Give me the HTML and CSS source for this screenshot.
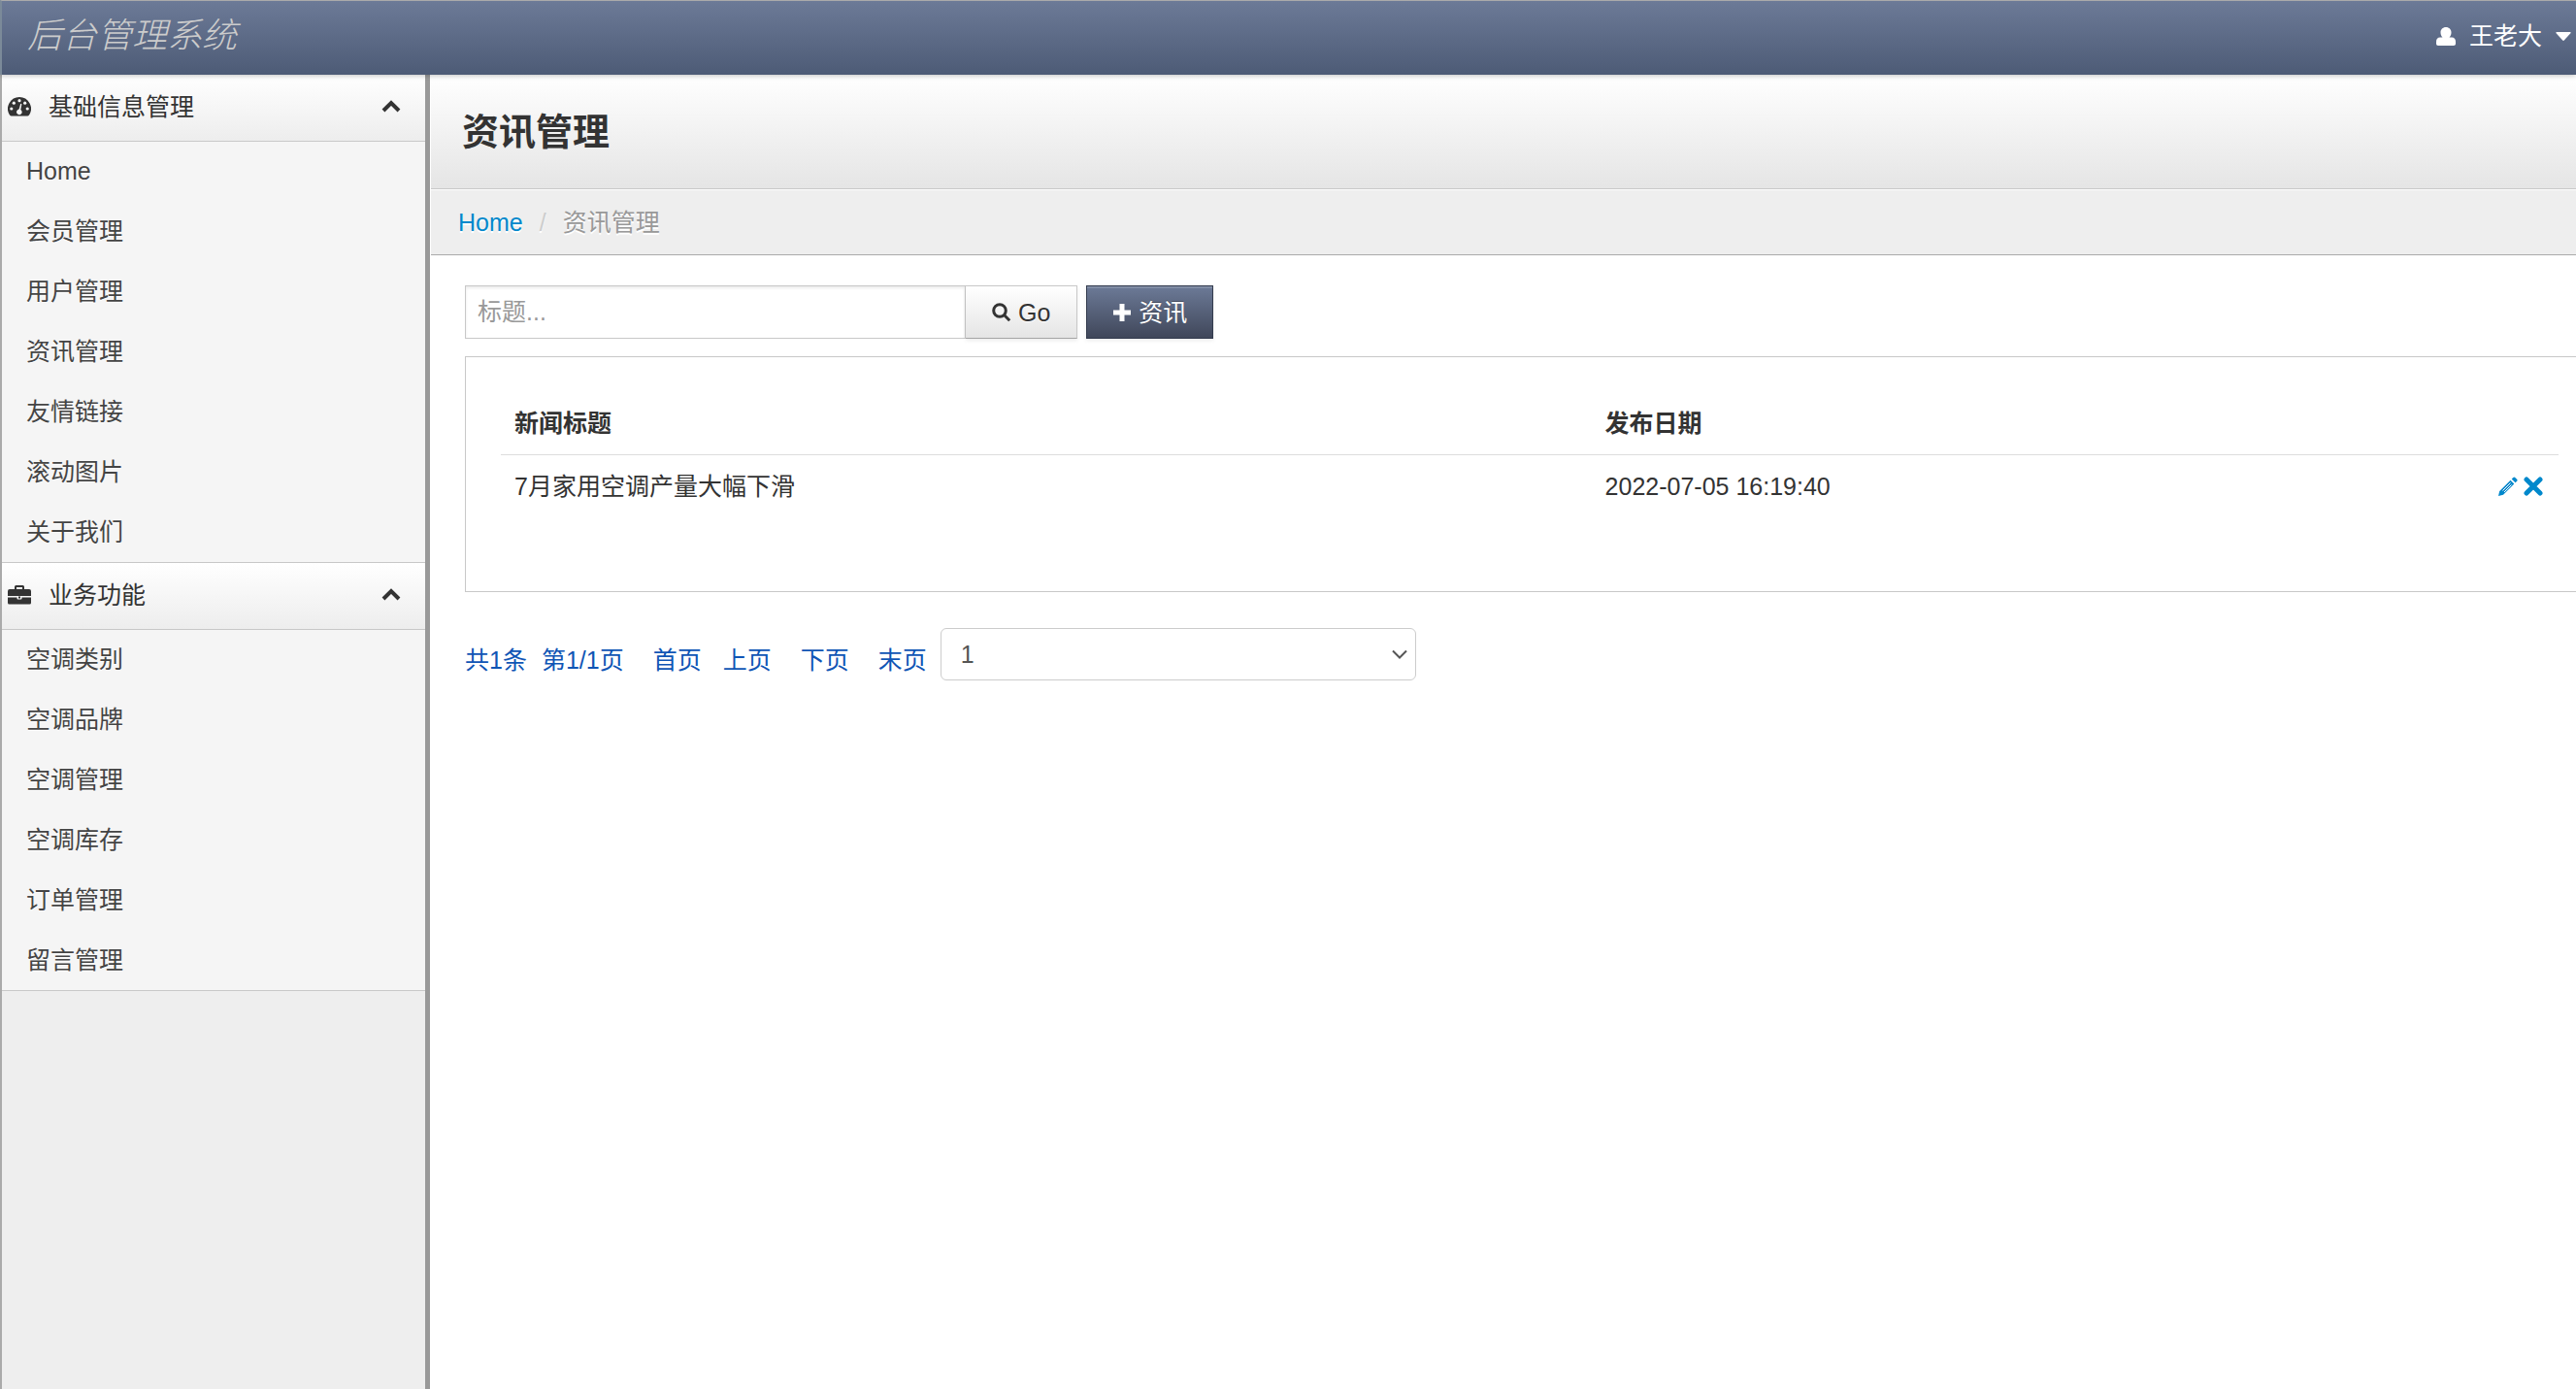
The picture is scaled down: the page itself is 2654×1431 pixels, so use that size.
FILE: index.html
```html
<!DOCTYPE html>
<html lang="zh-CN">
<head>
    <meta charset="UTF-8">
    <meta name="viewport" content="width=device-width, initial-scale=1.0">
    <title>后台管理系统</title>
    <link rel="stylesheet" href="styles.css">
</head>
<body>
    <header class="navbar">
        <a class="brand" href="#">后台管理系统</a>
        <button class="user-menu" type="button">
            <svg class="icon-user" viewBox="0 0 20 19"><path d="M10 0c3.300 0 5.500 2.400 5.500 5.500 0 2-.7 3.900-2 5h2.500c2.500 0 4 1.700 4 4.500V17c0 1.200-.8 2-2 2H2c-1.200 0-2-.8-2-2v-2c0-2.800 1.500-4.500 4-4.500h2.500c-1.300-1.100-2-3-2-5C4.500 2.400 6.700 0 10 0z"/></svg>
            <span>王老大</span>
            <svg class="icon-caret" viewBox="0 0 16 9"><path d="M1 0h14q1 0 .6.900L8.800 8.500q-.8.800-1.600 0L.4.900Q0 0 1 0z"/></svg>
        </button>
    </header>
    <div class="layout">
        <nav class="sidebar">
            <button class="nav-header" type="button">
                <svg class="icon-nav" viewBox="0 0 24 20">
                    <path d="M12 0a12 12 0 0 1 10.200 18.300q-.9 1.200-2 1.200H3.800q-1.100 0-2-1.200A12 12 0 0 1 12 0z"/>
                    <g class="cutout">
                        <circle cx="3.800" cy="12" r="1.600"/>
                        <circle cx="6.300" cy="6.200" r="1.600"/>
                        <circle cx="12" cy="3.700" r="1.600"/>
                        <circle cx="17.700" cy="6.200" r="1.600"/>
                        <circle cx="20.200" cy="12" r="1.600"/>
                        <path d="M13.200 6.800l1.200.4-1.100 5.800a2.800 2.800 0 1 1-1.700-.4z"/>
                    </g>
                </svg>
                <span>基础信息管理</span>
                <svg class="icon-chevron" viewBox="0 0 20 13"><path d="M2 11L10 3l8 8"/></svg>
            </button>
            <ul class="nav-list">
                <li><a href="#">Home</a></li>
                <li><a href="#">会员管理</a></li>
                <li><a href="#">用户管理</a></li>
                <li><a href="#">资讯管理</a></li>
                <li><a href="#">友情链接</a></li>
                <li><a href="#">滚动图片</a></li>
                <li><a href="#">关于我们</a></li>
            </ul>
            <button class="nav-header" type="button">
                <svg class="icon-nav" viewBox="0 0 24 20">
                    <path d="M7 4V1.500Q7 0 8.500 0h7Q17 0 17 1.500V4h5q2 0 2 2v5H0V6q0-2 2-2zM9 4h6V2H9zM0 12.500h9.500v1q0 1 1 1h3q1 0 1-1v-1H24V18q0 1.500-1.500 1.500h-21Q0 19.500 0 18zM11 11.500h2v2h-2z" fill-rule="evenodd"/>
                </svg>
                <span>业务功能</span>
                <svg class="icon-chevron" viewBox="0 0 20 13"><path d="M2 11L10 3l8 8"/></svg>
            </button>
            <ul class="nav-list">
                <li><a href="#">空调类别</a></li>
                <li><a href="#">空调品牌</a></li>
                <li><a href="#">空调管理</a></li>
                <li><a href="#">空调库存</a></li>
                <li><a href="#">订单管理</a></li>
                <li><a href="#">留言管理</a></li>
            </ul>
        </nav>
        <main class="content">
            <div class="page-header">
                <h1>资讯管理</h1>
            </div>
            <ul class="breadcrumb">
                <li><a href="#">Home</a></li>
                <li class="divider">/</li>
                <li class="active">资讯管理</li>
            </ul>
            <div class="container">
                <form class="toolbar">
                    <input class="search-input" type="text" placeholder="标题..." aria-label="标题">
                    <button class="btn" type="button">
                        <svg class="icon-search" viewBox="0 0 20 20"><circle cx="8" cy="8" r="6.300"/><path d="M12.800 12.800l5.400 5.400"/></svg>
                        Go
                    </button>
                    <button class="btn btn-primary" type="button">
                        <svg class="icon-plus" viewBox="0 0 20 20"><path d="M10 1v18M1 10h18"/></svg>
                        资讯
                    </button>
                </form>
                <div class="well">
                    <table class="table">
                        <thead>
                            <tr>
                                <th class="col-title">新闻标题</th>
                                <th>发布日期</th>
                                <th class="col-actions"></th>
                            </tr>
                        </thead>
                        <tbody>
                            <tr>
                                <td>7月家用空调产量大幅下滑</td>
                                <td>2022-07-05 16:19:40</td>
                                <td>
                                    <div class="actions">
                                        <a href="#" aria-label="编辑"><svg viewBox="0 0 20 20"><path d="M0 20l1.200-5L12.500 3.700l3.800 3.800L5 18.800zM13.700 2.500l1.600-1.600q1-1 2 0l1.800 1.800q1 1 0 2l-1.600 1.600z"/><path class="pencil-line" d="M4.500 14.500l8-8M6 16l7.500-7.500"/></svg></a>
                                        <a href="#" aria-label="删除"><svg viewBox="0 0 20 20"><path class="cross" d="M3 3l14 14M17 3L3 17"/></svg></a>
                                    </div>
                                </td>
                            </tr>
                        </tbody>
                    </table>
                </div>
                <div class="pagination">
                    <div class="pages">
                        <span>共1条</span>
                        <span class="current">第1/1页</span>
                        <a href="#">首页</a>
                        <a class="prev" href="#">上页</a>
                        <a href="#">下页</a>
                        <a href="#">末页</a>
                    </div>
                    <div class="select-wrap">
                        <select class="page-select" aria-label="页码">
                            <option>1</option>
                        </select>
                        <svg class="select-arrow" viewBox="0 0 16 10"><path d="M1 1.500l7 7 7-7"/></svg>
                    </div>
                </div>
            </div>
        </main>
    </div>
</body>
</html>
```

FILE: styles.css
```css
* {
    box-sizing: border-box;
}
body {
    margin: 0;
    min-height: 100vh;
    display: flex;
    flex-direction: column;
    font-family: "Liberation Sans", "Noto Sans CJK SC", sans-serif;
    font-size: 25px;
    line-height: 36px;
    color: #333;
    background: #fff;
}
a {
    color: #0088cc;
    text-decoration: none;
}
button, input, select {
    font: inherit;
    color: inherit;
}
button {
    cursor: pointer;
}
svg {
    display: block;
    flex: none;
    fill: currentColor;
}
ul {
    list-style: none;
    margin: 0;
    padding: 0;
}

/* top bar */
.navbar {
    position: relative;
    z-index: 1;
    display: flex;
    justify-content: space-between;
    align-items: center;
    height: 77px;
    padding: 0 5px 4px 26px;
    border-top: 1px solid #aaa;
    border-left: 2px solid #7b8a99;
    background: linear-gradient(to bottom, #6c7a97, #4d5b76);
    box-shadow: 0 1px 5px rgba(0, 0, 0, 0.25);
}
.brand {
    font-size: 36px;
    font-style: italic;
    font-weight: 300;
    color: #ccc;
}
.user-menu {
    display: flex;
    align-items: center;
    gap: 14px;
    padding: 0;
    border: 0;
    background: none;
    color: #fff;
}
.icon-user {
    width: 20px;
    height: 19px;
}
.icon-caret {
    width: 16px;
    height: 9px;
}

.layout {
    flex: 1;
    display: flex;
}

/* sidebar */
.sidebar {
    flex: none;
    width: 443px;
    border-left: 2px solid #aaa;
    border-right: 5px solid #999;
    background: #eee;
}
.nav-header {
    display: flex;
    align-items: center;
    width: 100%;
    height: 69px;
    padding: 0 25px 3px 6px;
    border: 0;
    border-bottom: 1px solid #c8c8c8;
    background: linear-gradient(to bottom, #fff, #ededed);
    text-align: left;
}
.nav-header span {
    flex: 1;
    margin-left: 18px;
}
.icon-nav {
    width: 24px;
    height: 20px;
}
.cutout {
    fill: #f8f8f8;
}
.icon-chevron {
    width: 20px;
    height: 13px;
    fill: none;
    stroke: currentColor;
    stroke-width: 4;
}
.nav-list {
    display: flex;
    flex-direction: column;
    gap: 1px;
    border-bottom: 1px solid #c8c8c8;
    background: #f5f5f5;
}
.nav-list a {
    display: block;
    padding: 0 25px;
    line-height: 61px;
    color: #444;
    text-shadow: 0 1px 0 #fff;
}

/* page title */
.content {
    flex: 1;
    min-width: 0;
    border-left: 1px solid #fff;
}
.page-header {
    padding: 37px 32px 36px;
    border-bottom: 1px solid #c8c8c8;
    background: linear-gradient(to bottom, #fff, #e5e5e5);
}
.page-header h1 {
    margin: 0;
    font-size: 38px;
    line-height: 44px;
    font-weight: bold;
}
.breadcrumb {
    display: flex;
    gap: 17px;
    padding: 15px 28px;
    border-top: 1px solid #fff;
    border-bottom: 1px solid #aaa;
    background: #eee;
    color: #999;
    text-shadow: 0 2px 0 #fff;
}
.breadcrumb .divider {
    color: #ccc;
}

.container {
    padding: 31px 0 0 35px;
}

/* search form */
.toolbar {
    display: flex;
}
.search-input {
    width: 516px;
    height: 55px;
    padding: 0 12px;
    border: 1px solid #c8c8c8;
    box-shadow: inset 0 2px 3px rgba(0, 0, 0, 0.08);
}
.search-input::placeholder {
    color: #999;
}
.btn {
    display: flex;
    align-items: center;
    gap: 7px;
    height: 55px;
    padding: 0 27px;
    border: 1px solid #c8c8c8;
    border-left: 0;
    border-bottom-color: #a5a5a5;
    background: linear-gradient(to bottom, #fff, #e5e5e5);
    box-shadow: 0 2px 4px rgba(0, 0, 0, 0.08);
    text-shadow: 0 1px 1px #fff;
}
.btn-primary {
    margin-left: 9px;
    padding: 0 26px;
    border: 1px solid #343c4e;
    background: linear-gradient(to bottom, #6c7a97, #40475a);
    box-shadow: inset 0 2px 0 rgba(255, 255, 255, 0.15), 0 2px 4px rgba(0, 0, 0, 0.08);
    color: #fff;
    text-shadow: 0 -1px 0 rgba(0, 0, 0, 0.3);
}
.icon-search, .icon-plus {
    width: 20px;
    height: 20px;
    fill: none;
    stroke: currentColor;
    stroke-width: 3;
}
.icon-plus {
    stroke-width: 5;
}

/* list */
.well {
    margin-top: 18px;
    padding: 36px 18px 76px 36px;
    border: 1px solid #c8c8c8;
    border-right: 0;
}
.table {
    width: 100%;
    border-collapse: collapse;
    table-layout: fixed;
}
.table th, .table td {
    padding: 14px;
    text-align: left;
}
.table th {
    font-weight: bold;
    border-bottom: 1px solid #ddd;
}
.col-title {
    width: 53%;
}
.col-actions {
    width: 90px;
}
.actions {
    display: flex;
    justify-content: flex-end;
    gap: 6px;
    padding-right: 2px;
}
.actions svg {
    width: 20px;
    height: 20px;
}
.pencil-line {
    fill: none;
    stroke: #fff;
    stroke-width: 1;
}
.cross {
    stroke: currentColor;
    stroke-width: 5;
    stroke-linecap: round;
}

/* pagination */
.pagination {
    display: flex;
    align-items: flex-start;
    margin-top: 37px;
    color: #0f55b5;
}
.pages {
    display: flex;
    padding-top: 15px;
}
.pages a {
    margin-left: 30px;
    color: inherit;
}
.pages .current {
    margin-left: 15px;
}
.pages .prev {
    margin-left: 22px;
}
.select-wrap {
    position: relative;
    width: 490px;
    margin-left: 14px;
    color: #555;
}
.page-select {
    display: block;
    appearance: none;
    width: 100%;
    height: 54px;
    padding: 0 20px;
    border: 1px solid #ccc;
    border-radius: 6px;
    background: #fff;
}
.select-arrow {
    position: absolute;
    right: 9px;
    top: 22px;
    width: 16px;
    height: 10px;
    fill: none;
    stroke: currentColor;
    stroke-width: 2;
    pointer-events: none;
}
```
